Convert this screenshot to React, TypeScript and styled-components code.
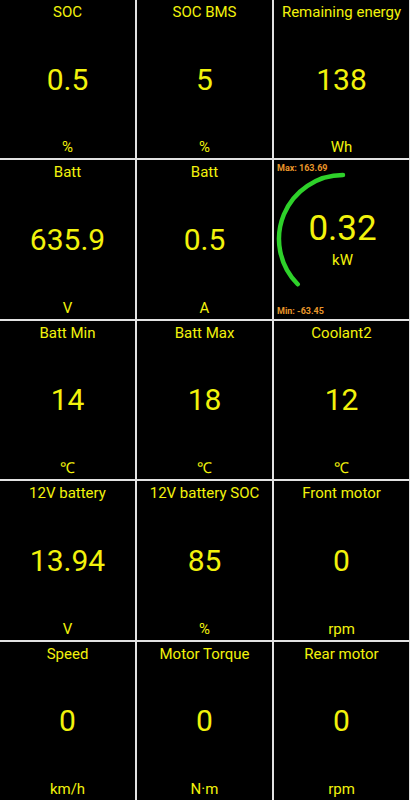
import styled, { createGlobalStyle } from "styled-components";

const GlobalStyle = createGlobalStyle`
  html, body {
    margin: 0;
    padding: 0;
    background: #000;
  }
  body {
    font-family: Roboto, "Liberation Sans", sans-serif;
  }
`;

const Board = styled.div`
  width: 410px;
  height: 800px;
  box-sizing: border-box;
  padding: 0 1px 0 0;
  display: grid;
  grid-template-columns: repeat(3, 1fr);
  grid-template-rows: repeat(5, 1fr);
  gap: 2px;
  background: #e2e2e2;
`;

const Cell = styled.div`
  position: relative;
  background: #000;
  color: #f2f20c;
  display: flex;
  flex-direction: column;
  align-items: center;
  justify-content: space-between;
  padding: 3px 2px 2px;
  overflow: hidden;
`;

const Title = styled.div`
  font-size: 15px;
  line-height: 18px;
  white-space: nowrap;
`;

const Value = styled.div`
  font-size: 30px;
  line-height: 36px;
`;

const Unit = styled.div`
  font-size: 15px;
  line-height: 18px;
`;

const GaugeCell = styled(Cell)`
  justify-content: center;
  padding: 0;
`;

const GaugeArc = styled.svg`
  position: absolute;
  left: 0;
  top: 0;
`;

const Limit = styled.div<{ $bottom?: boolean }>`
  position: absolute;
  left: 3px;
  ${(p) => (p.$bottom ? "bottom: 3px;" : "top: 3px;")}
  font-size: 9px;
  font-weight: 700;
  color: #e8962a;
  white-space: nowrap;
`;

const GaugeValue = styled.div`
  font-size: 35px;
  line-height: 40px;
  margin-left: 2px;
  margin-top: -2px;
`;

const GaugeUnit = styled.div`
  font-size: 15px;
  line-height: 18px;
  margin-left: 2px;
  margin-top: 2px;
`;

type Item = { title: string; value: string; unit: string };

const items: (Item | "gauge")[] = [
  { title: "SOC", value: "0.5", unit: "%" },
  { title: "SOC BMS", value: "5", unit: "%" },
  { title: "Remaining energy", value: "138", unit: "Wh" },
  { title: "Batt", value: "635.9", unit: "V" },
  { title: "Batt", value: "0.5", unit: "A" },
  "gauge",
  { title: "Batt Min", value: "14", unit: "℃" },
  { title: "Batt Max", value: "18", unit: "℃" },
  { title: "Coolant2", value: "12", unit: "℃" },
  { title: "12V battery", value: "13.94", unit: "V" },
  { title: "12V battery SOC", value: "85", unit: "%" },
  { title: "Front motor", value: "0", unit: "rpm" },
  { title: "Speed", value: "0", unit: "km/h" },
  { title: "Motor Torque", value: "0", unit: "N·m" },
  { title: "Rear motor", value: "0", unit: "rpm" },
];

function Gauge() {
  // arc centre relative to the cell, from top (-90deg) counter-clockwise to 135deg
  const cx = 69;
  const cy = 79;
  const r = 64;
  const a0 = (-90 * Math.PI) / 180;
  const a1 = (135 * Math.PI) / 180;
  const x0 = cx + r * Math.cos(a0);
  const y0 = cy + r * Math.sin(a0);
  const x1 = cx + r * Math.cos(a1);
  const y1 = cy + r * Math.sin(a1);
  return (
    <GaugeCell>
      <GaugeArc width="135" height="159" viewBox="0 0 135 159">
        <path
          d={`M ${x0} ${y0} A ${r} ${r} 0 0 0 ${x1} ${y1}`}
          fill="none"
          stroke="#2ed12a"
          strokeWidth="4.5"
          strokeLinecap="round"
        />
      </GaugeArc>
      <Limit>Max: 163.69</Limit>
      <GaugeValue>0.32</GaugeValue>
      <GaugeUnit>kW</GaugeUnit>
      <Limit $bottom>Min: -63.45</Limit>
    </GaugeCell>
  );
}

export default function App() {
  return (
    <>
      <GlobalStyle />
      <Board>
        {items.map((it, i) =>
          it === "gauge" ? (
            <Gauge key={i} />
          ) : (
            <Cell key={i}>
              <Title>{it.title}</Title>
              <Value>{it.value}</Value>
              <Unit>{it.unit}</Unit>
            </Cell>
          )
        )}
      </Board>
    </>
  );
}
